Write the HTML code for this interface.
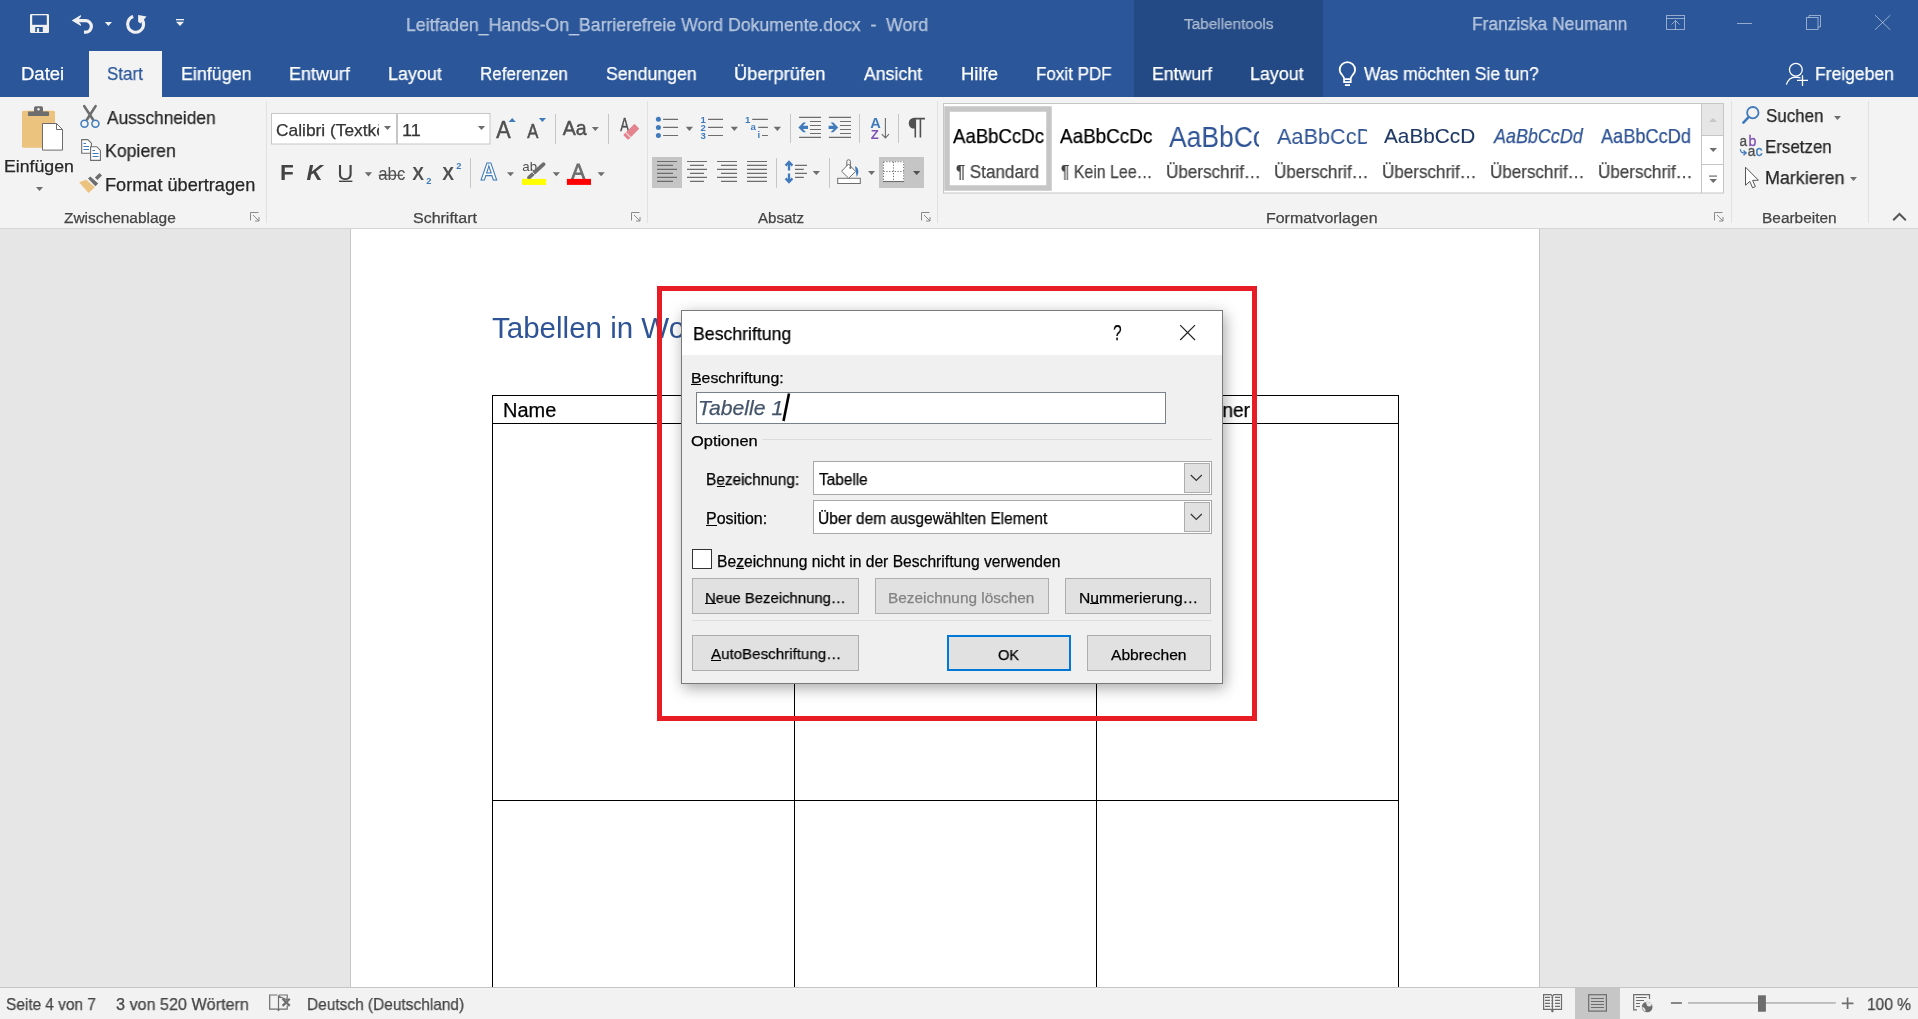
<!DOCTYPE html>
<html><head><meta charset="utf-8"><title>Word</title>
<style>
html,body{margin:0;padding:0;-webkit-font-smoothing:antialiased;width:1918px;height:1019px;overflow:hidden;background:#e6e6e6;font-family:"Liberation Sans",sans-serif;}
.t{position:absolute;white-space:pre;line-height:1;transform-origin:0 0;z-index:5;will-change:transform;-webkit-text-stroke:0.25px currentColor;}
.r{position:absolute;}
svg{position:absolute;overflow:visible;}
</style></head><body>
<!-- title bar + tabs -->
<div class="r" style="left:0;top:0;width:1918px;height:97px;background:#2b579a"></div>
<div class="r" style="left:1134px;top:0;width:189px;height:97px;background:#234a85"></div>
<div class="r" style="left:89px;top:51px;width:73px;height:46px;background:#f3f3f3"></div>
<!-- ribbon -->
<div class="r" style="left:0;top:97px;width:1918px;height:131px;background:#f3f3f3"></div>
<div class="r" style="left:0;top:228px;width:1918px;height:1px;background:#d5d5d5"></div>
<!-- group separators -->
<div class="r" style="left:266px;top:101px;width:1px;height:122px;background:#e1e1e1"></div>
<div class="r" style="left:647px;top:101px;width:1px;height:122px;background:#e1e1e1"></div>
<div class="r" style="left:937px;top:101px;width:1px;height:122px;background:#e1e1e1"></div>
<div class="r" style="left:1731px;top:101px;width:1px;height:122px;background:#e1e1e1"></div>
<div class="r" style="left:1868px;top:101px;width:1px;height:122px;background:#e1e1e1"></div>
<!-- document -->
<div class="r" style="left:350px;top:229px;width:1px;height:758px;background:#c6c6c6"></div>
<div class="r" style="left:351px;top:229px;width:1188px;height:758px;background:#fff"></div>
<div class="r" style="left:1539px;top:229px;width:1px;height:758px;background:#c6c6c6"></div>
<!-- table -->
<div class="r" style="left:492px;top:395px;width:907px;height:1px;background:#000"></div>
<div class="r" style="left:492px;top:423px;width:907px;height:1px;background:#000"></div>
<div class="r" style="left:492px;top:800px;width:907px;height:1px;background:#000"></div>
<div class="r" style="left:492px;top:395px;width:1px;height:592px;background:#000"></div>
<div class="r" style="left:794px;top:423px;width:1px;height:564px;background:#000"></div>
<div class="r" style="left:1096px;top:423px;width:1px;height:564px;background:#000"></div>
<div class="r" style="left:1398px;top:395px;width:1px;height:592px;background:#000"></div>
<!-- red highlight -->
<div class="r" style="left:657px;top:286px;width:590px;height:425px;border:5px solid #e81c24;z-index:2"></div>
<!-- dialog -->
<div class="r" style="left:681px;top:310px;width:540px;height:372px;border:1px solid #7a7a7a;background:#f0f0f0;z-index:3;box-shadow:2px 4px 14px rgba(0,0,0,0.35)"></div>
<div class="r" style="left:682px;top:311px;width:540px;height:44px;background:#fff;z-index:3"></div>
<!-- caption field -->
<div class="r" style="left:696px;top:392px;width:468px;height:30px;border:1px solid #7a7f8c;background:#fff;z-index:4"></div>
<!-- group line -->
<div class="r" style="left:762px;top:439px;width:450px;height:1px;background:#dcdcdc;z-index:4"></div>
<!-- combos -->
<div class="r" style="left:813px;top:461px;width:397px;height:32px;border:1px solid #a8a8a8;background:#fff;z-index:4"></div>
<div class="r" style="left:1184px;top:463px;width:24px;height:28px;border:1px solid #adadad;background:#e1e1e1;z-index:4"></div>
<div class="r" style="left:813px;top:500px;width:397px;height:32px;border:1px solid #a8a8a8;background:#fff;z-index:4"></div>
<div class="r" style="left:1184px;top:502px;width:24px;height:28px;border:1px solid #adadad;background:#e1e1e1;z-index:4"></div>
<!-- checkbox -->
<div class="r" style="left:692px;top:549px;width:18px;height:18px;border:1px solid #333;background:#fff;z-index:4"></div>
<!-- buttons -->
<div class="r" style="left:692px;top:578px;width:165px;height:34px;border:1px solid #adadad;background:#e1e1e1;z-index:4"></div>
<div class="r" style="left:875px;top:578px;width:172px;height:34px;border:1px solid #adadad;background:#e1e1e1;z-index:4"></div>
<div class="r" style="left:1065px;top:578px;width:144px;height:34px;border:1px solid #adadad;background:#e1e1e1;z-index:4"></div>
<div class="r" style="left:692px;top:620px;width:520px;height:1px;background:#dcdcdc;z-index:4"></div>
<div class="r" style="left:692px;top:635px;width:165px;height:34px;border:1px solid #adadad;background:#e1e1e1;z-index:4"></div>
<div class="r" style="left:947px;top:635px;width:120px;height:32px;border:2px solid #0078d7;background:#e1e1e1;z-index:4"></div>
<div class="r" style="left:1087px;top:635px;width:122px;height:34px;border:1px solid #adadad;background:#e1e1e1;z-index:4"></div>
<!-- status bar -->
<div class="r" style="left:0;top:987px;width:1918px;height:1px;background:#c6c6c6"></div>
<div class="r" style="left:0;top:988px;width:1918px;height:31px;background:#f2f2f2"></div>
<div class="r" style="left:1575px;top:988px;width:45px;height:31px;background:#c6c6c6"></div>

<svg width="1918" height="1019" style="left:0;top:0;z-index:2" font-family="Liberation Sans">
<!-- ===== QAT ===== -->
<g fill="#f0f0f0">
  <rect x="30" y="14" width="19" height="19" rx="1.2"/>
</g>
<rect x="32.2" y="15.3" width="14.6" height="9.5" fill="#2b579a"/>
<rect x="35.2" y="27" width="7.6" height="5" fill="#2b579a"/>
<rect x="36.9" y="28.2" width="2.2" height="3.8" fill="#f0f0f0"/>
<!-- undo -->
<path d="M76.5 20.7 H85.6 A5.75 5.75 0 0 1 85.6 32.2 H84" fill="none" stroke="#f0f0f0" stroke-width="3.2"/>
<path d="M71.7 20.6 L80.9 15 V16.8 L77.6 20.6 L80.9 24.2 V25.9 Z" fill="#f0f0f0"/>
<path d="M104.8 22 H112 L108.4 26 Z" fill="#f0f0f0"/>
<!-- redo -->
<path d="M133.2 16.6 A8 8 0 1 0 141.6 19" fill="none" stroke="#f0f0f0" stroke-width="3.1"/>
<path d="M138.1 15 L146.6 16.6 L140.4 23.4 L138.1 21.8 Z" fill="#f0f0f0"/>
<!-- customize -->
<rect x="176" y="19" width="8" height="1.3" fill="#f0f0f0"/>
<path d="M176 21.8 H184 L180 26 Z" fill="#f0f0f0"/>
<!-- ===== window controls ===== -->
<g fill="none" stroke="rgba(255,255,255,0.5)" stroke-width="1">
  <rect x="1666.5" y="15.5" width="18" height="14"/>
  <path d="M1666.5 18.5 H1684.5 M1675.5 20.5 V29.5 M1671.5 24.5 L1675.5 20.5 L1679.5 24.5"/>
  <path d="M1737 23.5 H1752"/>
  <rect x="1806.5" y="17.5" width="11.5" height="12"/>
  <path d="M1809 17.5 V15.5 H1820.5 V27 H1818"/>
  <path d="M1875 15.2 L1890.3 29.8 M1890.3 15.2 L1875 29.8"/>
</g>
<!-- lightbulb -->
<g fill="none" stroke="#fff" stroke-width="1.8">
  <path d="M1344.2 78.6 C1343.6 75.6 1339.7 73.6 1339.7 69.9 A7.7 7.7 0 1 1 1355.1 69.9 C1355.1 73.6 1351.3 75.6 1350.6 78.6"/>
  <rect x="1344.1" y="79.1" width="6.6" height="3.0"/>
</g>
<rect x="1344.9" y="84.2" width="5.1" height="1.8" fill="#fff"/>
<!-- person -->
<g fill="none" stroke="#fff" stroke-width="1.3">
  <circle cx="1795.85" cy="69.75" r="6.4"/>
  <path d="M1786.4 84.6 C1788 79.5 1792 77.3 1795.5 77.2 C1797.5 77.2 1799.3 77.6 1800.6 78"/>
  <path d="M1802.5 75.3 V85.9 M1797 80.4 H1808"/>
</g>
<!-- ===== Zwischenablage ===== -->
<rect x="22" y="110.8" width="33" height="37" rx="1.5" fill="#ebc27e"/>
<rect x="28" y="111.5" width="21" height="4.6" rx="0.8" fill="#6d6d6d"/>
<rect x="34" y="106.2" width="9" height="6" rx="1.5" fill="#6d6d6d"/>
<circle cx="38.5" cy="109.2" r="1.2" fill="#f3f3f3"/>
<path d="M42.5 123.5 H56.5 L62.5 129.5 V150.1 H42.5 Z" fill="#fff" stroke="#6d6d6d" stroke-width="1"/>
<path d="M56.5 123.5 V129.5 H62.5" fill="none" stroke="#6d6d6d" stroke-width="1"/>
<path d="M36 187 H43 L39.5 191 Z" fill="#6d6d6d"/>
<!-- scissors -->
<path d="M84.2 106.1 L93 119.5 M95.6 106.1 L87 119.5" stroke="#6d6d6d" stroke-width="2.6" stroke-linecap="round" fill="none"/>
<circle cx="84.5" cy="123.8" r="3.5" fill="#f3f3f3" stroke="#3f7bbb" stroke-width="1.5"/>
<circle cx="95.4" cy="123.8" r="3.5" fill="#f3f3f3" stroke="#3f7bbb" stroke-width="1.5"/>
<!-- copy -->
<g stroke="#6d6d6d" stroke-width="1.1">
  <path d="M81.7 139.6 H87.8 L91.4 143.2 V153.3 H81.7 Z" fill="#fff"/>
  <path d="M90.6 146.7 H96.7 L100.4 150.4 V160.4 H90.6 Z" fill="#fff"/>
</g>
<g stroke="#3f7bbb" stroke-width="1">
  <path d="M83.5 143.5 H86 M83.5 146.5 H89 M83.5 149.5 H89"/>
  <path d="M92.5 150.5 H95 M92.5 153.5 H98.5 M92.5 156.5 H98.5"/>
</g>
<!-- brush -->
<path d="M94.9 177.4 L99.5 172.9 L102 175.5 L97.4 180.1 Z" fill="#6d6d6d"/>
<path d="M88 178.4 L90.3 176.5 L98.2 183.5 L95.4 186.3 Z" fill="#6d6d6d"/>
<path d="M79.1 182.2 L86.2 179.8 L94.8 187.3 L88.5 193.1 Z" fill="#ebc27e"/>
<!-- launchers -->
<g fill="none" stroke="#8a8a8a" stroke-width="1">
  <path d="M250.5 220.5 V212.5 H258.5"/><path d="M253 215 L259 221 M259 217 V221 H255"/>
  <path d="M631.5 220.5 V212.5 H639.5"/><path d="M634 215 L640 221 M640 217 V221 H636"/>
  <path d="M921.5 220.5 V212.5 H929.5"/><path d="M924 215 L930 221 M930 217 V221 H926"/>
  <path d="M1714.5 220.5 V212.5 H1722.5"/><path d="M1717 215 L1723 221 M1723 217 V221 H1719"/>
</g>
<path d="M1893.2 220.3 L1899.5 214 L1905.8 220.3" fill="none" stroke="#555" stroke-width="2"/>
<!-- ===== Schriftart ===== -->
<rect x="271.5" y="113.5" width="125" height="30.5" fill="#fff" stroke="#c6c6c6" stroke-width="1"/>
<rect x="397.5" y="113.5" width="92.5" height="30.5" fill="#fff" stroke="#c6c6c6" stroke-width="1"/>
<g fill="#6d6d6d">
  <path d="M383.9 126.1 H391.1 L387.5 130 Z"/>
  <path d="M477.9 126.1 H485.1 L481.5 130 Z"/>
  <path d="M591.8 127.1 H598.8 L595.3 131 Z"/>
  <path d="M364.8 172.2 H372.1 L368.45 176.4 Z"/>
  <path d="M507 172.2 H514 L510.5 176.2 Z"/>
  <path d="M552.7 172.2 H560 L556.35 176.2 Z"/>
  <path d="M597.5 172.2 H604.8 L601.15 176.2 Z"/>
</g>
<g fill="#c6c6c6">
  <rect x="555" y="114" width="1" height="30"/>
  <rect x="608" y="114" width="1" height="30"/>
  <rect x="470" y="158" width="1" height="30"/>
  <rect x="790" y="114" width="1" height="29"/>
  <rect x="859" y="114" width="1" height="29"/>
  <rect x="898" y="114" width="1" height="29"/>
  <rect x="776" y="158" width="1" height="30"/>
  <rect x="829" y="158" width="1" height="30"/>
</g>
<g fill="#505050" stroke="#505050" stroke-width="0.5">
  <text x="496.3" y="138" font-size="23.5" transform="translate(496.3 0) scale(0.92 1) translate(-496.3 0)">A</text>
  <text x="527.2" y="138" font-size="19.4" transform="translate(527.2 0) scale(0.86 1) translate(-527.2 0)">A</text>
  <text x="562.8" y="135" font-size="21" transform="translate(562.8 0) scale(0.93 1) translate(-562.8 0)">Aa</text>
</g>
<path d="M508.6 122 L512.2 118 L515.8 122 Z" fill="#3f7bbb"/>
<path d="M538.8 118 H546 L542.4 122 Z" fill="#3f7bbb"/>
<!-- eraser -->
<text x="620.3" y="131" font-size="17.5" fill="#505050" stroke="#505050" stroke-width="0.4" transform="translate(620.3 0) scale(0.75 1) translate(-620.3 0)">A</text>
<g transform="rotate(-45 631.3 131.8)">
  <rect x="623.3" y="128.3" width="16" height="7" rx="1" fill="#e4848f"/>
  <rect x="626.4" y="128.3" width="0.9" height="7" fill="#f3f3f3"/>
</g>
<!-- F K U abc X2 X2 -->
<text x="280" y="180" font-size="22.6" font-weight="bold" fill="#444">F</text>
<text x="306.6" y="180" font-size="22.6" font-weight="bold" font-style="italic" fill="#444">K</text>
<text x="337.2" y="180" font-size="22.3" fill="#444">U</text>
<rect x="339" y="180.6" width="13.4" height="1.4" fill="#444"/>
<text x="378.3" y="180" font-size="17.5" fill="#505050" transform="translate(378.3 0) scale(0.96 1) translate(-378.3 0)">abc</text>
<rect x="378.6" y="174.7" width="24.3" height="1.1" fill="#505050"/>
<text x="412.3" y="180" font-size="17.6" font-weight="bold" fill="#505050">X</text>
<text x="426.3" y="183.8" font-size="9.3" font-weight="bold" fill="#3f7bbb">2</text>
<text x="442.3" y="180" font-size="17.6" font-weight="bold" fill="#505050">X</text>
<text x="456.2" y="169.2" font-size="9.3" font-weight="bold" fill="#3f7bbb">2</text>
<!-- text effects A -->
<text x="480.6" y="180.2" font-size="24.5" font-weight="bold" fill="#fff" stroke="#3f7bbb" stroke-width="1.1" transform="translate(480.6 0) scale(0.95 1) translate(-480.6 0)">A</text>
<!-- highlighter -->
<text x="522.3" y="170.8" font-size="13.3" fill="#505050">ab</text>
<path d="M529 177.6 L543.6 164.2" stroke="#6d6d6d" stroke-width="3.8" stroke-linecap="round"/>
<path d="M532.2 172 L534.8 174.6" stroke="#f3f3f3" stroke-width="1"/>
<rect x="522" y="178.9" width="24.1" height="6" fill="#ff0"/>
<text x="571.2" y="179" font-size="22" fill="#6d6d6d" stroke="#6d6d6d" stroke-width="0.8" transform="translate(571.2 0) scale(0.95 1) translate(-571.2 0)">A</text>
<rect x="566.9" y="178.9" width="24.1" height="6" fill="#f00"/>
<!-- ===== Absatz ===== -->
<g fill="#3f7bbb">
  <circle cx="658.4" cy="119.3" r="2.5"/><circle cx="658.4" cy="127.4" r="2.5"/><circle cx="658.4" cy="135.5" r="2.5"/>
</g>
<g stroke="#6d6d6d" stroke-width="1.2">
  <path d="M663.1 119.3 H678.1 M663.1 127.4 H678.1 M663.1 135.5 H678.1"/>
  <path d="M708 119.3 H723 M708 127.4 H723 M708 135.5 H723"/>
  <path d="M752.2 119.3 H767.9 M758.3 127.4 H767.9 M762 135.5 H767.9"/>
</g>
<g fill="#3f7bbb" font-size="9.6" font-weight="bold">
  <text x="700.5" y="122.8">1</text><text x="700.5" y="131">2</text><text x="700.5" y="139.2">3</text>
  <text x="745" y="123">1</text><text x="750.6" y="129.8">a</text><text x="757.5" y="137.8">i</text>
</g>
<g fill="#6d6d6d">
  <path d="M685.8 126.8 H693 L689.4 131 Z"/>
  <path d="M730.7 126.8 H738 L734.35 131 Z"/>
  <path d="M773.7 126.8 H781 L777.35 131 Z"/>
</g>
<!-- indent -->
<g stroke="#6d6d6d" stroke-width="1.1">
  <path d="M799.1 117.4 H821 M810 121.5 H821 M810 125.5 H821 M810 129.5 H821 M810 133.5 H821 M799.1 137.4 H821"/>
  <path d="M828.9 117.4 H851 M840 121.5 H851 M840 125.5 H851 M840 129.5 H851 M840 133.5 H851 M828.9 137.4 H851"/>
</g>
<path d="M798.4 127.4 L803.2 122.6 H806 L802.9 125.7 H808 V129.1 H802.9 L806 132.2 H803.2 Z" fill="#3f7bbb"/>
<path d="M838.2 127.4 L833.4 122.6 H830.6 L833.7 125.7 H828.6 V129.1 H833.7 L830.6 132.2 H833.4 Z" fill="#3f7bbb"/>
<!-- sort -->
<text x="870.2" y="127.8" font-size="14.6" font-weight="bold" fill="#3f7bbb">A</text>
<text x="870.8" y="138.7" font-size="13.2" font-weight="bold" fill="#7e4fb5">Z</text>
<path d="M885.4 118 V138 M881.8 134.2 L885.4 138 L889 134.2" fill="none" stroke="#6d6d6d" stroke-width="1.1"/>
<!-- pilcrow -->
<path d="M915.5 118 H914 C910.5 118 908.8 120.5 908.8 123.2 C908.8 126 910.5 128.6 914 128.6 H915.5 Z" fill="#505050"/>
<path d="M913.5 118.6 H925 M915.3 118.6 V137.6 M920.4 118.6 V137.6" fill="none" stroke="#505050" stroke-width="1.6"/>
<!-- alignment -->
<rect x="652" y="157" width="30" height="31" fill="#c5c5c5"/>
<g stroke="#6d6d6d" stroke-width="1.2">
  <path d="M657 161.5 H677 M657 165.4 H673 M657 169.4 H677 M657 173.4 H673 M657 177.4 H677 M657 181.4 H673"/>
  <path d="M687 161.5 H707 M690 165.4 H704 M687 169.4 H707 M690 173.4 H704 M687 177.4 H707 M690 181.4 H704"/>
  <path d="M717 161.5 H737 M721 165.4 H737 M717 169.4 H737 M721 173.4 H737 M717 177.4 H737 M721 181.4 H737"/>
  <path d="M747 161.5 H767 M747 165.4 H767 M747 169.4 H767 M747 173.4 H767 M747 177.4 H767 M747 181.4 H767"/>
  <path d="M795 165.3 H807 M795 169.4 H803.8 M795 173.4 H807 M795 177.4 H803.8"/>
</g>
<!-- line spacing -->
<g fill="none" stroke="#3f7bbb" stroke-width="2.3">
  <path d="M789 162 V170.5 M789 173.5 V182"/>
  <path d="M785.6 165.6 L789 162 L792.4 165.6 M785.6 178.4 L789 182 L792.4 178.4"/>
</g>
<path d="M812.7 171 H820 L816.35 175 Z" fill="#6d6d6d"/>
<!-- shading -->
<rect x="837.7" y="178.3" width="22.6" height="5.2" fill="#fff" stroke="#6d6d6d" stroke-width="1"/>
<path d="M848.5 164 L855.6 171.4 L848.7 178.2 L841.6 171.2 Z" fill="#fff" stroke="#6d6d6d" stroke-width="1"/>
<path d="M846.8 166 V161.5 A1.8 1.8 0 0 1 850.4 161.5 V167.5" fill="none" stroke="#6d6d6d" stroke-width="1"/>
<circle cx="850.4" cy="167.8" r="1.1" fill="#6d6d6d"/>
<path d="M855 166.3 C858.5 167.5 859.5 172 856.8 177 L855.8 172 Z" fill="#3f7bbb"/>
<path d="M868.1 171 H875 L871.55 175 Z" fill="#6d6d6d"/>
<!-- borders -->
<rect x="879" y="157" width="45" height="31" fill="#c5c5c5"/>
<rect x="883" y="161.3" width="21" height="20" fill="#fff"/>
<g fill="none" stroke="#6d6d6d" stroke-width="1" stroke-dasharray="1.2 1.6">
  <path d="M883.5 161.8 H903.6 V181 M883.5 161.8 V181 M883.5 171.5 H903.6 M893.5 161.8 V181"/>
</g>
<path d="M883 181.5 H904" stroke="#6d6d6d" stroke-width="1.1"/>
<path d="M913 171 H920.3 L916.65 175 Z" fill="#505050"/>
<!-- ===== Formatvorlagen ===== -->
<rect x="943.5" y="103.5" width="780" height="89.5" fill="#fff" stroke="#c6c6c6" stroke-width="1"/>
<rect x="947" y="109" width="102" height="79" fill="none" stroke="#c6c6c6" stroke-width="5.5"/>
<rect x="1702" y="104" width="21" height="31.5" fill="#e6e6e6"/>
<path d="M1701.5 104 V193 M1702 135.5 H1723 M1702 164.5 H1723" stroke="#c6c6c6" stroke-width="1"/>
<path d="M1709 122 L1713 118 L1717 122 Z" fill="#c6c6c6"/>
<path d="M1709.5 148 H1717 L1713.25 152 Z" fill="#6d6d6d"/>
<rect x="1709" y="175.5" width="8" height="1.2" fill="#6d6d6d"/>
<path d="M1709.5 179 H1717 L1713.25 183 Z" fill="#6d6d6d"/>
<!-- ===== Bearbeiten ===== -->
<circle cx="1752.8" cy="112.7" r="5.7" fill="none" stroke="#3f7bbb" stroke-width="1.8"/>
<path d="M1748.6 117.1 L1743.4 122.6" stroke="#3f7bbb" stroke-width="2.6" stroke-linecap="round"/>
<path d="M1834 116 H1841 L1837.5 120 Z M1850 177 H1857 L1853.5 181 Z" fill="#6d6d6d"/>
<text x="1739.6" y="146.2" font-size="14.6" fill="#505050" stroke="#505050" stroke-width="0.35" transform="translate(1739.6 0) scale(0.93 1) translate(-1739.6 0)">a</text>
<text x="1748.6" y="146.2" font-size="14.6" fill="#7e4fb5" stroke="#7e4fb5" stroke-width="0.35" transform="translate(1748.6 0) scale(0.97 1) translate(-1748.6 0)">b</text>
<text x="1747.8" y="156.3" font-size="14.6" fill="#505050" stroke="#505050" stroke-width="0.35" transform="translate(1747.8 0) scale(0.93 1) translate(-1747.8 0)">a</text>
<text x="1755.6" y="156.3" font-size="14.6" fill="#3f7bbb" stroke="#3f7bbb" stroke-width="0.35" transform="translate(1755.6 0) scale(0.97 1) translate(-1755.6 0)">c</text>
<path d="M1740.3 149.3 C1740.6 152.5 1742 153 1746 153 M1743.5 150.6 L1746.2 153 L1743.5 155.2" fill="none" stroke="#3f7bbb" stroke-width="1.3"/>
<path d="M1745.5 167.2 V185.2 L1749.8 181.4 L1752.6 187.8 L1755.4 186.6 L1752.6 180.4 L1758.4 180.2 Z" fill="#fff" stroke="#555" stroke-width="1"/>
<!-- ===== status bar ===== -->
<g fill="none" stroke="#6d6d6d" stroke-width="1.2">
  <path d="M277.5 995 H269.7 V1009.2 H277.5 L278.5 1010.5 L279.5 1009.2 H287.2 V1005.5 M287.2 999.8 V995 H279.5 L278.5 996.3 Z M278.5 996.5 V1011"/>
  <path d="M1543.6 994.7 H1551 L1552.4 996.3 L1553.8 994.7 H1561.5 V1009.3 H1553.8 L1552.4 1010.9 L1551 1009.3 H1543.6 Z M1552.4 996.3 V1011.2"/>
  <path d="M1545 997.4 H1550 M1545 1000.4 H1550 M1545 1003.4 H1550 M1545 1006.4 H1550 M1555 997.4 H1560 M1555 1000.4 H1560 M1555 1003.4 H1560 M1555 1006.4 H1560"/>
  <rect x="1588.7" y="994.7" width="17.7" height="16.4"/>
  <path d="M1591 998.5 H1604 M1591 1001.5 H1604 M1591 1004.5 H1604 M1591 1007.5 H1604"/>
  <path d="M1637 1009.8 H1633.7 V994.7 H1649.5 V999"/>
  <path d="M1636 997.5 H1646.5 M1636 1000.5 H1644 M1636 1003.5 H1640 M1636 1006.5 H1640"/>
</g>
<path d="M282.6 998.8 L289.7 1005.9 M289.7 998.8 L282.6 1005.9" stroke="#6d6d6d" stroke-width="2.3"/>
<path d="M1550.8 1011 L1552.4 1012.4 L1554 1011 Z" fill="#6d6d6d"/><g fill="#6d6d6d"><rect x="1551.5" y="996.7" width="1.8" height="1.4"/><rect x="1551.5" y="999.7" width="1.8" height="1.4"/><rect x="1551.5" y="1002.7" width="1.8" height="1.4"/><rect x="1551.5" y="1005.7" width="1.8" height="1.4"/></g>
<circle cx="1647.2" cy="1007" r="5.8" fill="#6d6d6d" stroke="#f2f2f2" stroke-width="0.9"/>
<path d="M1645.2 1002.5 C1647.5 1003.5 1646 1005.5 1648 1006.2 C1650 1007 1651.8 1005.8 1651.9 1004.3 C1651 1002.8 1649 1001.8 1647.4 1001.8 Z M1643 1007 C1644.5 1008.2 1646 1009 1645.5 1011.6 C1644 1010.9 1642.5 1009.2 1642.1 1007.5 Z" fill="#f2f2f2" opacity="0.9"/>
<rect x="1670.9" y="1002.2" width="11" height="1.6" fill="#6d6d6d"/>
<rect x="1688" y="1002.3" width="147.8" height="1.3" fill="#a6a6a6"/>
<rect x="1758" y="995.3" width="7.9" height="16.4" fill="#6d6d6d"/>
<path d="M1841.8 1003.3 H1853.4 M1847.6 997.5 V1009.1" stroke="#6d6d6d" stroke-width="1.7"/>
</svg>
<!-- dialog icons -->
<svg width="1918" height="1019" style="left:0;top:0;z-index:6;pointer-events:none">
<path d="M1180.2 325.2 L1195 340 M1195 325.2 L1180.2 340" stroke="#222" stroke-width="1.2"/>
<path d="M1190.8 475 L1196.3 480.5 L1201.8 475" fill="none" stroke="#333" stroke-width="1.2"/>
<path d="M1190.8 514 L1196.3 519.5 L1201.8 514" fill="none" stroke="#333" stroke-width="1.2"/>
<path d="M789 393.5 L783.5 421" stroke="#000" stroke-width="2.6"/>
</svg>

<div class="t" style="left:405.82px;top:14.80px;font-size:19.06px;color:rgba(255,255,255,0.62);transform:scaleX(0.9281);">Leitfaden_Hands-On_Barrierefreie Word Dokumente.docx  -  Word</div>
<div class="t" style="left:1471.84px;top:15.08px;font-size:18.49px;color:rgba(255,255,255,0.62);transform:scaleX(0.9399);">Franziska Neumann</div>
<div class="t" style="left:1183.96px;top:16.32px;font-size:15.50px;color:rgba(255,255,255,0.55);transform:scaleX(0.9891);">Tabellentools</div>
<div class="t" style="left:21.07px;top:65.18px;font-size:18.49px;color:#fff;transform:scaleX(0.9900);">Datei</div>
<div class="t" style="left:180.80px;top:65.18px;font-size:18.49px;color:#fff;transform:scaleX(0.9657);">Einfügen</div>
<div class="t" style="left:288.90px;top:65.18px;font-size:18.49px;color:#fff;transform:scaleX(0.9721);">Entwurf</div>
<div class="t" style="left:387.70px;top:65.18px;font-size:18.49px;color:#fff;transform:scaleX(0.9716);">Layout</div>
<div class="t" style="left:479.97px;top:65.18px;font-size:18.49px;color:#fff;transform:scaleX(0.9192);">Referenzen</div>
<div class="t" style="left:605.65px;top:65.18px;font-size:18.49px;color:#fff;transform:scaleX(0.9592);">Sendungen</div>
<div class="t" style="left:734.16px;top:65.18px;font-size:18.49px;color:#fff;transform:scaleX(0.9876);">Überprüfen</div>
<div class="t" style="left:863.80px;top:65.18px;font-size:18.49px;color:#fff;transform:scaleX(0.9571);">Ansicht</div>
<div class="t" style="left:960.56px;top:65.18px;font-size:18.49px;color:#fff;">Hilfe</div>
<div class="t" style="left:1035.67px;top:65.18px;font-size:18.49px;color:#fff;transform:scaleX(0.9208);">Foxit PDF</div>
<div class="t" style="left:1151.61px;top:65.18px;font-size:18.49px;color:#fff;transform:scaleX(0.9591);">Entwurf</div>
<div class="t" style="left:1250.30px;top:65.18px;font-size:18.49px;color:#fff;transform:scaleX(0.9679);">Layout</div>
<div class="t" style="left:1363.60px;top:65.18px;font-size:18.49px;color:#fff;transform:scaleX(0.9432);">Was möchten Sie tun?</div>
<div class="t" style="left:1815.13px;top:65.18px;font-size:18.49px;color:#fff;transform:scaleX(0.9469);">Freigeben</div>
<div class="t" style="left:106.97px;top:65.18px;font-size:18.49px;color:#2b579a;transform:scaleX(0.9160);">Start</div>
<div class="t" style="left:3.72px;top:157.77px;font-size:17.21px;color:#262626;transform:scaleX(1.0299);">Einfügen</div>
<div class="t" style="left:106.80px;top:109.32px;font-size:18.21px;color:#262626;transform:scaleX(0.9501);">Ausschneiden</div>
<div class="t" style="left:105.42px;top:142.32px;font-size:18.21px;color:#262626;transform:scaleX(0.9725);">Kopieren</div>
<div class="t" style="left:105.38px;top:175.54px;font-size:18.07px;color:#262626;transform:scaleX(1.0042);">Format übertragen</div>
<div class="t" style="left:63.82px;top:209.98px;font-size:15.08px;color:#444;transform:scaleX(1.0261);">Zwischenablage</div>
<div class="t" style="left:413.00px;top:209.98px;font-size:15.08px;color:#444;transform:scaleX(1.0600);">Schriftart</div>
<div class="t" style="left:757.70px;top:209.98px;font-size:15.08px;color:#444;">Absatz</div>
<div class="t" style="left:1266.36px;top:209.98px;font-size:15.08px;color:#444;transform:scaleX(1.0563);">Formatvorlagen</div>
<div class="t" style="left:1762.19px;top:209.98px;font-size:15.08px;color:#444;transform:scaleX(1.0239);">Bearbeiten</div>
<div style="position:absolute;left:272px;top:0;width:107px;height:1019px;overflow:hidden"><div class="t" style="left:3.79px;top:121.75px;font-size:17.35px;color:#333;">Calibri (Textkörper)</div></div>
<div class="t" style="left:402.17px;top:121.75px;font-size:17.35px;color:#333;transform:scaleX(1.0415);">11</div>
<div class="t" style="left:1765.97px;top:107.24px;font-size:18.78px;color:#262626;transform:scaleX(0.9026);">Suchen</div>
<div class="t" style="left:1765.18px;top:138.44px;font-size:18.78px;color:#262626;transform:scaleX(0.9011);">Ersetzen</div>
<div class="t" style="left:1765.10px;top:169.34px;font-size:18.07px;color:#262626;transform:scaleX(0.9899);">Markieren</div>
<div class="t" style="left:952.70px;top:127.36px;font-size:19.35px;color:#000;transform:scaleX(0.9617);">AaBbCcDc</div>
<div class="t" style="left:956.37px;top:164.21px;font-size:17.64px;color:#444;transform:scaleX(0.9678);">¶ Standard</div>
<div class="t" style="left:1060.00px;top:127.36px;font-size:19.35px;color:#000;transform:scaleX(0.9755);">AaBbCcDc</div>
<div class="t" style="left:1060.50px;top:164.21px;font-size:17.64px;color:#444;transform:scaleX(0.9000);">¶ Kein Lee…</div>
<div style="position:absolute;left:1166px;top:0;width:93px;height:1019px;overflow:hidden"><div class="t" style="left:2.90px;top:122.50px;font-size:28.59px;color:#2f5496;transform:scaleX(0.9260);-webkit-text-stroke:0;">AaBbCcDd</div></div>
<div class="t" style="left:1166.43px;top:164.21px;font-size:17.64px;color:#444;transform:scaleX(0.9693);">Überschrif…</div>
<div style="position:absolute;left:1274px;top:0;width:93.20000000000005px;height:1019px;overflow:hidden"><div class="t" style="left:2.90px;top:126.38px;font-size:22.62px;color:#2f5496;transform:scaleX(0.9582);-webkit-text-stroke:0;">AaBbCcDd</div></div>
<div class="t" style="left:1274.43px;top:164.21px;font-size:17.64px;color:#444;transform:scaleX(0.9662);">Überschrif…</div>
<div style="position:absolute;left:1381px;top:0;width:94px;height:1019px;overflow:hidden"><div class="t" style="left:3.00px;top:126.45px;font-size:20.77px;color:#1f3864;-webkit-text-stroke:0.1px currentColor;">AaBbCcDd</div></div>
<div class="t" style="left:1382.43px;top:164.21px;font-size:17.64px;color:#444;transform:scaleX(0.9662);">Überschrif…</div>
<div class="t" style="left:1494.12px;top:126.45px;font-size:20.77px;color:#2f5496;font-style:italic;transform:scaleX(0.8634);">AaBbCcDd</div>
<div class="t" style="left:1490.43px;top:164.21px;font-size:17.64px;color:#444;transform:scaleX(0.9662);">Überschrif…</div>
<div class="t" style="left:1600.60px;top:126.45px;font-size:20.77px;color:#2f5496;transform:scaleX(0.8753);">AaBbCcDd</div>
<div class="t" style="left:1598.43px;top:164.21px;font-size:17.64px;color:#444;transform:scaleX(0.9662);">Überschrif…</div>
<div class="t" style="left:492.04px;top:314.36px;font-size:28.88px;color:#2f5496;transform:scaleX(1.0225);z-index:1;-webkit-text-stroke:0;">Tabellen in Word</div>
<div class="t" style="left:502.84px;top:400.87px;font-size:19.91px;color:#000;transform:scaleX(1.0028);z-index:1;">Name</div>
<div class="t" style="left:1108.00px;top:400.87px;font-size:19.91px;color:#000;transform:scaleX(0.9651);z-index:1;">Ansprechpartner</div>
<div class="t" style="left:692.62px;top:325.02px;font-size:18.92px;color:#000;transform:scaleX(0.9355);">Beschriftung</div>
<div class="t" style="left:1113.41px;top:322.66px;font-size:21.34px;color:#000;transform:scaleX(0.7311);">?</div>
<div class="t" style="left:690.76px;top:371.07px;font-size:14.51px;color:#000;transform:scaleX(1.0944);">Beschriftung:</div><div style="position:absolute;left:690.8px;top:384.2px;width:10.6px;height:1px;background:#000;z-index:5"></div>
<div class="t" style="left:698.35px;top:397.75px;font-size:20.77px;color:#44546a;font-style:italic;transform:scaleX(1.0197);">Tabelle 1</div>
<div class="t" style="left:691.23px;top:433.85px;font-size:14.65px;color:#000;transform:scaleX(1.1216);">Optionen</div>
<div class="t" style="left:706.40px;top:471.70px;font-size:15.65px;color:#000;transform:scaleX(0.9828);">Bezeichnung:</div><div style="position:absolute;left:716.7px;top:485.8px;width:8.6px;height:1px;background:#000;z-index:5"></div>
<div class="t" style="left:818.56px;top:471.70px;font-size:15.65px;color:#000;transform:scaleX(0.9834);">Tabelle</div>
<div class="t" style="left:706.25px;top:510.50px;font-size:15.65px;color:#000;transform:scaleX(1.0195);">Position:</div><div style="position:absolute;left:706.3px;top:524.6px;width:10.6px;height:1px;background:#000;z-index:5"></div>
<div class="t" style="left:817.63px;top:510.50px;font-size:15.65px;color:#000;transform:scaleX(0.9912);">Über dem ausgewählten Element</div>
<div class="t" style="left:717.28px;top:553.50px;font-size:15.65px;color:#000;">Bezeichnung nicht in der Beschriftung verwenden</div><div style="position:absolute;left:736.4px;top:567.6px;width:7.8px;height:1px;background:#000;z-index:5"></div>
<div class="t" style="left:705.04px;top:589.54px;font-size:15.36px;color:#000;transform:scaleX(0.9700);">Neue Bezeichnung…</div><div style="position:absolute;left:705.0px;top:603.4px;width:10.8px;height:1px;background:#000;z-index:5"></div>
<div class="t" style="left:888.20px;top:589.54px;font-size:15.36px;color:#838383;transform:scaleX(1.0022);">Bezeichnung löschen</div>
<div class="t" style="left:1078.58px;top:589.54px;font-size:15.36px;color:#000;transform:scaleX(1.0199);">Nummerierung…</div><div style="position:absolute;left:1089.9px;top:603.4px;width:8.7px;height:1px;background:#000;z-index:5"></div>
<div class="t" style="left:711.10px;top:646.24px;font-size:15.36px;color:#000;transform:scaleX(0.9844);">AutoBeschriftung…</div><div style="position:absolute;left:711.1px;top:660.1px;width:10.1px;height:1px;background:#000;z-index:5"></div>
<div class="t" style="left:997.71px;top:646.86px;font-size:15.22px;color:#000;transform:scaleX(0.9614);">OK</div>
<div class="t" style="left:1111.20px;top:646.54px;font-size:15.36px;color:#000;transform:scaleX(1.0171);">Abbrechen</div>
<div class="t" style="left:5.72px;top:996.20px;font-size:16.36px;color:#444;transform:scaleX(0.9404);">Seite 4 von 7</div>
<div class="t" style="left:116.30px;top:996.20px;font-size:16.36px;color:#444;transform:scaleX(0.9869);">3 von 520 Wörtern</div>
<div class="t" style="left:307.19px;top:996.20px;font-size:16.36px;color:#444;transform:scaleX(0.9442);">Deutsch (Deutschland)</div>
<div class="t" style="left:1866.73px;top:996.20px;font-size:16.36px;color:#444;transform:scaleX(0.9493);">100 %</div>
</body></html>
